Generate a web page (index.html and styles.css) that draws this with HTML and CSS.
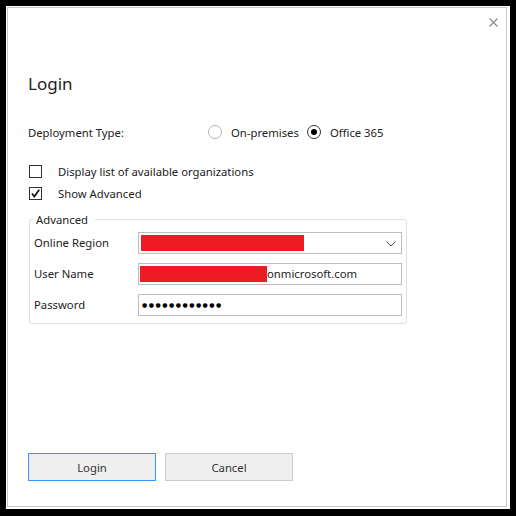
FILE: index.html
```html
<!DOCTYPE html>
<html>
<head>
<meta charset="utf-8">
<link rel="stylesheet" href="styles.css">
</head>
<body>
<div class="frame">
  <div class="dialog">
    <div class="topbar">
      <span class="close" aria-label="Close">
        <svg width="9" height="9" viewBox="0 0 9 9"><path d="M0.5 0.5 L8.5 8.5 M8.5 0.5 L0.5 8.5" stroke="#8a8a8a" stroke-width="1.1" fill="none"/></svg>
      </span>
    </div>
    <h1 class="title">Login</h1>
    <div class="deploy">
      <span class="deploy-label">Deployment Type:</span>
      <span class="radios">
        <span class="radio"><span class="radio-circle"></span><span>On-premises</span></span>
        <span class="radio"><span class="radio-circle checked"><span class="dot"></span></span><span>Office 365</span></span>
      </span>
    </div>
    <div class="checks">
      <div class="check"><span class="box"></span><span>Display list of available organizations</span></div>
      <div class="check"><span class="box"><svg width="11" height="11" viewBox="0 0 11 11"><path d="M2 5.5 L4.3 8.5 L9.2 1.8" stroke="#111" stroke-width="1.7" fill="none"/></svg></span><span>Show Advanced</span></div>
    </div>
    <fieldset class="group">
      <legend class="legend">Advanced</legend>
      <div class="row">
        <span class="label">Online Region</span>
        <div class="field combo">
          <span class="redact redact-region"></span>
          <svg class="chev" width="10" height="6" viewBox="0 0 10 6"><path d="M0.5 0.5 L5 5 L9.5 0.5" stroke="#555" stroke-width="1" fill="none"/></svg>
        </div>
      </div>
      <div class="row">
        <span class="label">User Name</span>
        <div class="field user"><span class="redact redact-user"></span><span>onmicrosoft.com</span></div>
      </div>
      <div class="row">
        <span class="label">Password</span>
        <div class="field pass"><span class="dots">●●●●●●●●●●●●</span></div>
      </div>
    </fieldset>
    <div class="spacer"></div>
    <div class="buttons">
      <button class="btn primary">Login</button>
      <button class="btn">Cancel</button>
    </div>
  </div>
</div>
</body>
</html>
```
FILE: styles.css
```css
html, body {
  margin: 0;
  padding: 0;
  background: #000;
  height: 516px;
  overflow: hidden;
}
body {
  font-family: "Noto Sans", "Open Sans", sans-serif;
  font-size: 11.3px;
  color: #222;
}
.frame {
  margin: 6px 6px 0 6px;
  width: 504px;
  height: 503px;
  background: #fff;
  box-sizing: border-box;
  padding: 1px 3px 2px 1px;
}
.dialog {
  box-sizing: border-box;
  height: 500px;
  border: 1px solid #c9c9c9;
  display: flex;
  flex-direction: column;
  padding: 0 0 0 20px;
}
.topbar {
  display: flex;
  justify-content: flex-end;
  padding: 10px 8px 0 0;
  height: 9px;
}
.close {
  display: block;
  width: 9px;
  height: 9px;
  line-height: 0;
}
.title {
  margin: 45px 0 0 0;
  font-size: 17px;
  font-weight: normal;
  line-height: 24px;
  color: #222;
}
.deploy {
  display: flex;
  align-items: center;
  margin-top: 28px;
  height: 16px;
}
.deploy-label {
  width: 180px;
}
.radios {
  display: flex;
  gap: 8px;
}
.radio {
  display: flex;
  align-items: center;
  gap: 9px;
}
.radio-circle {
  box-sizing: border-box;
  width: 14px;
  height: 14px;
  border-radius: 50%;
  border: 1px solid #b5b5b5;
  display: flex;
  align-items: center;
  justify-content: center;
}
.radio-circle.checked {
  border-color: #333;
}
.dot {
  width: 6px;
  height: 6px;
  border-radius: 50%;
  background: #000;
}
.checks {
  margin-top: 24px;
  display: flex;
  flex-direction: column;
  gap: 8.5px;
}
.check {
  display: flex;
  align-items: center;
  gap: 16px;
  height: 14px;
  padding-left: 1px;
}
.box {
  box-sizing: border-box;
  width: 13px;
  height: 13px;
  border: 1px solid #333;
  display: flex;
  align-items: center;
  justify-content: center;
}
.group {
  margin: 11px 0 0 1px;
  width: 378px;
  box-sizing: border-box;
  border: 1px solid #d9e0e6;
  border-radius: 3px;
  padding: 4px 4px 7px 4px;
  display: flex;
  flex-direction: column;
  gap: 9px;
}
.legend {
  padding: 0 7px 0 3px;
  margin-left: -1px;
  line-height: 16px;
}
.row {
  display: flex;
  align-items: center;
}
.label {
  width: 104px;
}
.field {
  box-sizing: border-box;
  width: 264px;
  height: 22px;
  border: 1px solid #bdbdbd;
  display: flex;
  align-items: center;
  position: relative;
}
.redact {
  display: block;
  background: #ed1c24;
  height: 16px;
}
.redact-region {
  width: 163px;
  margin-left: 2px;
}
.redact-user {
  width: 127px;
  margin-left: 1px;
}
.chev {
  position: absolute;
  right: 5px;
  top: 8px;
}
.dots {
  font-family: "DejaVu Sans", sans-serif;
  font-size: 6px;
  letter-spacing: 1.5px;
  margin-left: 3px;
  color: #000;
}
.spacer {
  flex: 1;
}
.buttons {
  display: flex;
  gap: 9px;
  margin-bottom: 25px;
}
.btn {
  box-sizing: border-box;
  width: 128px;
  height: 28px;
  background: #efefef;
  border: 1px solid #cccccc;
  font-family: inherit;
  font-size: 11.3px;
  color: #333;
  padding: 0;
}
.btn.primary {
  border-color: #3399ff;
}
```
